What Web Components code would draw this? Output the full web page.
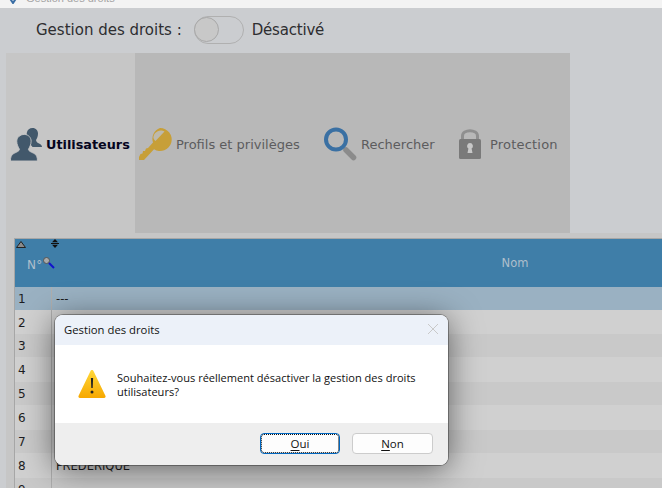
<!DOCTYPE html>
<html lang="fr">
<head>
<meta charset="utf-8">
<title>Gestion des droits</title>
<style>
html, body { margin: 0; height: 100%; overflow: hidden; }
body { width: 662px; height: 488px; position: relative; background: #cbcdd0; font-family: "DejaVu Sans", sans-serif; }
</style>
</head>
<body>
<app-window>
  <toggle-row label="Gestion des droits :" state="Désactivé"></toggle-row>
  <tab-strip>
    <tab-item active label="Utilisateurs">
      <svg slot="icon" width="34" height="34" viewBox="0 0 34 34"><path transform="translate(-2.500 0)" fill="#42586b" d="M25 1c3.500 0 5.500 2.500 5.500 5.500 0 3-1 5-2 6.500 0 2 2 3 4 4 1.500.8 2 2 2 3H25c-1-2-3-3-5-4-.5-2-.5-3 0-4-1-3-1-5-.5-7C20 3 22 1 25 1z"/><path transform="translate(0 3.400) scale(.9)" fill="#42586b" stroke="#c6c6c6" d="M16 4.500c4.500 0 7.500 3.500 7.500 7.500 0 4-2 7-3 9 0 2 3 3 6 4.500 3 1.500 4 4 4 8.500H.5c0-4.500 1-7 4-8.500s6-2.500 6-4.500c-1-2-3-5-3-9 0-4 3.500-7.500 8.500-7.500z"/></svg>
    </tab-item>
    <tab-item label="Profils et privilèges">
      <svg slot="icon" width="34" height="34" viewBox="0 0 34 34"><path fill="#c79f38" d="M22 1a11.500 11.500 0 1 1-6 21.200L6 33H1v-3l1.500-3 2-.5.5-2.500h2l1-2.500 2-.5 5-5.500A11.500 11.500 0 0 1 22 1z"/><path fill="#bdb9ac" d="M15.500 9.500a7.500 7.500 0 0 1 11-5L17.500 14c-1.500-1-2.500-3-2-4.500z"/></svg>
    </tab-item>
    <tab-item label="Rechercher">
      <svg slot="icon" width="34" height="34" viewBox="0 0 34 34"><path stroke="#8b8b8b" stroke-width="5.500" stroke-linecap="round" d="M23 23l7.500 7.500"/><circle cx="13" cy="12.500" r="10" fill="none" stroke="#3a70a3" stroke-width="4"/></svg>
    </tab-item>
    <tab-item label="Protection">
      <svg slot="icon" width="24" height="30" viewBox="0 0 24 30"><path fill="none" stroke="#8f8f8f" stroke-width="3" d="M4.500 11V7c0-7 15-7 15 0v4"/><rect x="1" y="10" width="22" height="20" rx="1.500" fill="#7a7a7a"/><path fill="#c8c8c8" d="M12 14a3 3 0 0 1 1.600 5.500l.9 4.500h-5l.9-4.500A3 3 0 0 1 12 14z"/></svg>
    </tab-item>
  </tab-strip>
  <user-table></user-table>
</app-window>
<confirm-dialog heading="Gestion des droits" message="Souhaitez-vous réellement désactiver la gestion des droits utilisateurs?"></confirm-dialog>

<script>
class AppWindow extends HTMLElement {
  constructor() {
    super();
    this.attachShadow({ mode: "open" }).innerHTML = `
      <style>
      :host { display: flex; flex-direction: column; width: 662px; height: 488px; overflow: hidden; }
      .title { height: 8px; flex: none; background: #f3f3f3; overflow: hidden; display: flex; padding-left: 8px; }
      .title svg { flex: none; margin-top: -4px; }
      .title span { font: 11px/11px "Liberation Sans", sans-serif; color: #a4a4a4; margin: -7px 0 0 8px; }
      </style>
      <div class="title"><svg width="10" height="8" viewBox="0 0 10 8"><path d="M1 1l4 6 4-6" fill="none" stroke="#3a6ea5" stroke-width="2"/></svg><span>Gestion des droits</span></div>
      <slot></slot>`;
  }
}

class ToggleRow extends HTMLElement {
  constructor() {
    super();
    this.attachShadow({ mode: "open" }).innerHTML = `
      <style>
      :host { display: flex; align-items: center; height: 43px; padding-bottom: 2px; flex: none; padding-left: 36px; font-size: 15px; color: #2e2e30; }
      .sw { width: 50px; height: 28px; box-sizing: border-box; margin: 0 8px 0 12px; border: 1px solid #b0b0b0; border-radius: 14px; display: flex; align-items: center; }
      .knob { width: 25px; height: 25px; box-sizing: border-box; border-radius: 50%; background: #c8c8c8; border: 1px solid #a8a8a8; margin-left: -1px; }
      .s { letter-spacing: -.2px; }
      </style>
      <span class="l"></span><div class="sw"><div class="knob"></div></div><span class="s"></span>`;
    this.shadowRoot.querySelector(".l").textContent = this.getAttribute("label");
    this.shadowRoot.querySelector(".s").textContent = this.getAttribute("state");
  }
}

class TabStrip extends HTMLElement {
  constructor() {
    super();
    this.attachShadow({ mode: "open" }).innerHTML = `
      <style>
      :host { display: flex; flex: none; width: 564px; height: 180px; margin-left: 6px; background: #b8b8b8; }
      </style>
      <slot></slot>`;
  }
}

class TabItem extends HTMLElement {
  constructor() {
    super();
    this.attachShadow({ mode: "open" }).innerHTML = `
      <style>
      :host { display: flex; align-items: center; height: 180px; box-sizing: border-box; padding-top: 2px; font-size: 13px; color: #5c5c5e; }
      :host([active]) { background: #c6c6c6; color: #05051e; font-weight: bold; font-size: 12.800px; }
      :host(:nth-child(1)) { width: 129px; padding-left: 4px; gap: 2px; }
      :host(:nth-child(2)) { width: 186px; padding-left: 3px; gap: 4px; }
      :host(:nth-child(3)) { width: 133px; padding-left: 2px; gap: 4px; }
      :host(:nth-child(4)) { flex: 1; padding-left: 4px; gap: 8px; letter-spacing: .2px; }
      ::slotted(svg) { flex: none; margin-top: -1px; }
      span { white-space: nowrap; }
      </style>
      <slot name="icon"></slot><span></span>`;
    this.shadowRoot.querySelector("span").textContent = this.getAttribute("label");
  }
}

class UserTable extends HTMLElement {
  constructor() {
    super();
    const names = ["---", "", "", "", "", "", "", "FRÉDÉRIQUE", ""];
    const rows = names.map((name, i) => `
      <div class="row ${i === 0 ? "sel" : ""}"><div class="n">${i + 1}</div><div class="c">${name}</div></div>`).join("");
    this.attachShadow({ mode: "open" }).innerHTML = `
      <style>
      :host { display: block; flex: 1; margin-left: 6px; padding: 5px 0 0 8px; background: #c6c6c6; overflow: hidden; font-size: 12px; color: #1d1d22; }
      .tbl { width: 964px; border-left: 1px solid #a6a6a6; box-sizing: border-box; }
      .head { position: relative; height: 49px; box-sizing: border-box; border-top: 1px solid #a6a6a6; background: #3f7ea8; color: #aebfcc; display: grid; grid-template-columns: 37px 1fr; }
      .up { position: absolute; left: 1px; top: 2px; }
      .sort { position: absolute; left: 36px; top: 0; }
      .no { display: flex; align-items: center; padding: 2px 0 0 12px; letter-spacing: .3px; }
      .no svg { flex: none; margin: -3px 0 0 0; }
      .nom { text-align: center; line-height: 49px; font-size: 11.500px; }
      .row { height: 25px; display: grid; grid-template-columns: 37px 1fr; background: #d0d0d0; line-height: 26px; }
      .row:nth-child(even) { height: 23px; background: #c9c9c9; line-height: 25px; }
      .row:nth-child(2) { height: 23px; }
      .row:nth-child(3) { height: 24px; }
      .row.sel { background: #9ab1c2; }
      .n { padding-left: 3px; border-right: 1px solid #aeaeae; }
      .c { padding-left: 4px; font-size: 11.500px; }
      </style>
      <div class="tbl">
      <div class="head">
        <svg class="up" width="10" height="7" viewBox="0 0 10 7"><path d="M5 .5l4.500 6H.5z" fill="#8a8a8a" stroke="#222"/></svg>
        <svg class="sort" width="8" height="9" viewBox="0 0 8 9"><path d="M4 0l3 3.200H1zM4 9L1 5.800h6z" fill="#111"/><path d="M0 4.500h8" stroke="#111"/></svg>
        <div class="no">N°<svg width="12" height="12" viewBox="0 0 12 12"><circle cx="3.500" cy="3.500" r="3" fill="#aaa" stroke="#555"/><path d="M6 6l5 5" stroke="#11c" stroke-width="2"/></svg></div>
        <div class="nom">Nom</div>
      </div>
      ${rows}
      </div>`;
  }
}

class ConfirmDialog extends HTMLElement {
  constructor() {
    super();
    this.attachShadow({ mode: "open" }).innerHTML = `
      <style>
      :host { position: absolute; left: 55px; top: 315px; width: 393px; height: 150px; display: flex; flex-direction: column; border-radius: 8px; overflow: hidden; box-shadow: 0 4px 32px rgba(0,0,0,.55), 0 0 0 1px rgba(90,90,90,.55); font-family: "Open Sans", sans-serif; color: #111; background: #fff; }
      .top { height: 30px; flex: none; box-sizing: border-box; padding: 0 10px 2px 9px; background: #ecf1f9; display: flex; align-items: center; justify-content: space-between; font-size: 11.300px; }
      .top svg { margin-top: 0; }
      .body { flex: 1; display: flex; align-items: center; padding: 1px 0 0 23px; gap: 11px; font-size: 11.050px; line-height: 14px; }
      .body svg { flex: none; margin-top: -1px; }
      .foot { height: 42px; flex: none; box-sizing: border-box; background: #eee; display: flex; justify-content: flex-end; align-items: center; gap: 12px; padding: 0 15px 2px 0; }
      button { width: 81px; height: 21px; padding: 1px 0 0; background: #fdfdfd; border: 1px solid #ccc; border-radius: 4px; font: 11.500px "Open Sans", sans-serif; color: #111; }
      button.def { width: 80px; border: 1px solid #0067c0; outline: 1px dotted #111; outline-offset: -2px; }
      u { text-underline-offset: 2px; }
      </style>
      <div class="top"><span class="h"></span><svg width="10" height="10" viewBox="0 0 10 10"><path d="M0 0l10 10M10 0L0 10" stroke="#c9c9c9"/></svg></div>
      <div class="body">
        <svg width="28" height="28" viewBox="0 0 28 28"><defs><linearGradient id="w" x1="0" y1="0" x2="0" y2="1"><stop offset="0" stop-color="#ffd83a"/><stop offset="1" stop-color="#f7a800"/></linearGradient></defs><path d="M14 0c.8 0 1.200.5 1.600 1.200l11.800 24.600c.6 1.200-.1 2.200-1.300 2.200H1.900C.7 28 0 27 .6 25.800L12.400 1.200C12.800.5 13.200 0 14 0z" fill="url(#w)"/><path d="M12.900 8h2.200l-.4 10h-1.400z" fill="#222"/><circle cx="14" cy="22" r="1.500" fill="#222"/></svg>
        <span class="m"></span>
      </div>
      <div class="foot"><button class="def"><u>O</u>ui</button><button><u>N</u>on</button></div>`;
    this.shadowRoot.querySelector(".h").textContent = this.getAttribute("heading");
    this.shadowRoot.querySelector(".m").textContent = this.getAttribute("message");
  }
}

customElements.define("app-window", AppWindow);
customElements.define("toggle-row", ToggleRow);
customElements.define("tab-strip", TabStrip);
customElements.define("tab-item", TabItem);
customElements.define("user-table", UserTable);
customElements.define("confirm-dialog", ConfirmDialog);
</script>
</body>
</html>
